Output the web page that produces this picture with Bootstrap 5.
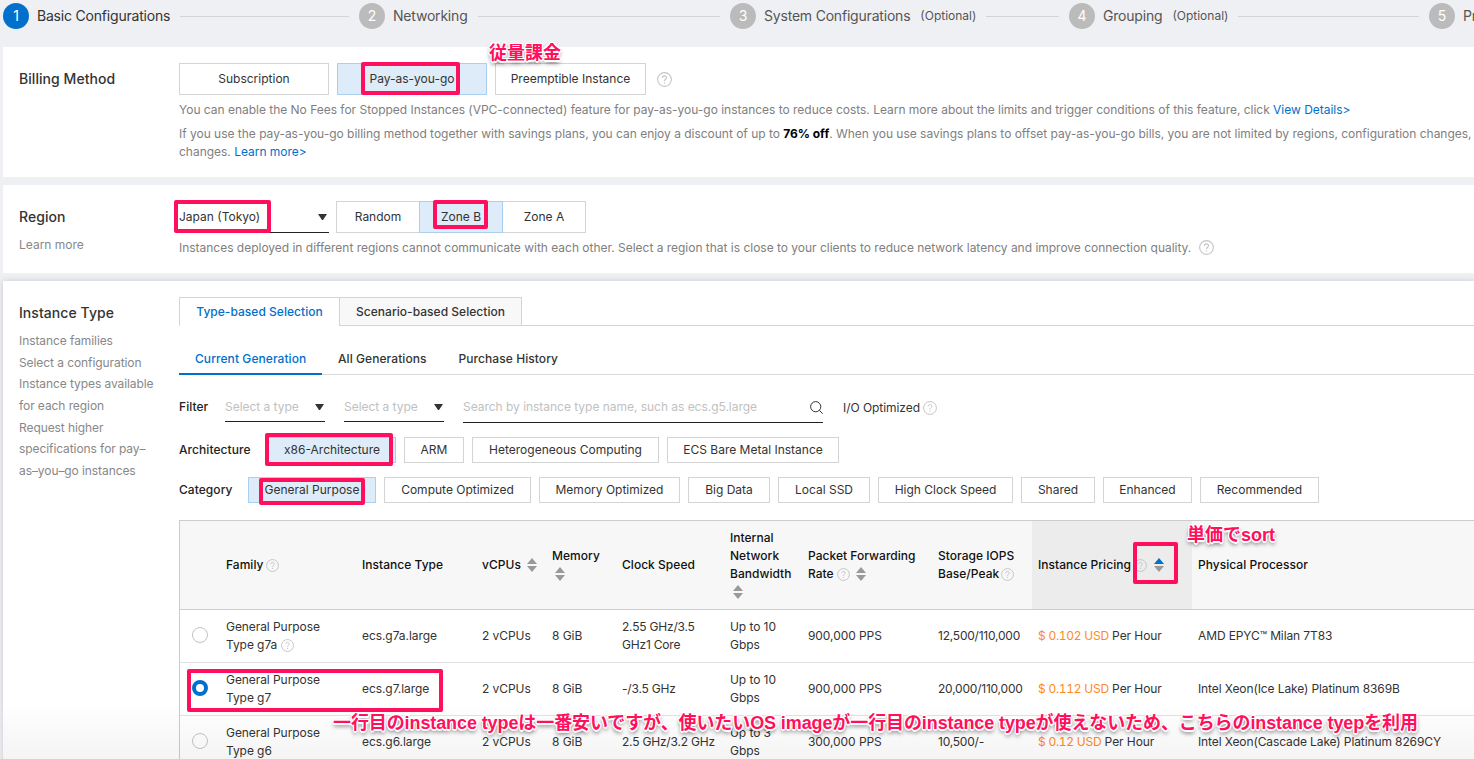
<!DOCTYPE html>
<html lang="en">
<head>
<meta charset="utf-8">
<meta name="viewport" content="width=device-width, initial-scale=1">
<title>Basic Configurations</title>
<link href="https://cdn.jsdelivr.net/npm/bootstrap@5.3.0/dist/css/bootstrap.min.css" rel="stylesheet">
<style>
  body { font-family: Inter, "Noto Sans CJK JP", sans-serif; font-size: 12px; line-height: 18px; color: #333; background: #eff0f4; height: 759px; overflow: hidden; position: relative; }
  .stepper { height: 47px; padding: 3px 0 0 3px; overflow: hidden; }
  .step-item { height: 26px; flex: none; font-size: 14px; letter-spacing: -.2px; color: #555; white-space: nowrap; }
  .step-num { width: 26px; height: 26px; background: #bbb; color: #fff; margin-right: 8px; flex: none; font-size: 14px; }
  .step-item.active .step-num { background: #0070cc; }
  .step-item.active { color: #333; }
  .step-line { height: 1px; background: #d4d4d4; margin: 0 10px; flex: 1; }
  .opt { font-size: 12px; margin-left: 10px; letter-spacing: 0; }
  .panel { background: #fff; margin: 0 0 8px 3px; padding: 16px 0 16px 16px; }
  .panel-raised { box-shadow: 0 0 6px rgba(0,0,0,.16); height: 500px; }
  .side { width: 160px; flex: none; color: #888; }
  .side-title { font-size: 14px; font-weight: 500; color: #333; line-height: 32px; letter-spacing: .06px; }
  .side-links { line-height: 21.65px; width: 140px; padding-top: 1px; letter-spacing: -.08px; }
  .body-col { flex: 1; min-width: 0; white-space: nowrap; }
  .choice { border: 1px solid #d4d4d4; background: #fff; border-radius: 0; color: #333; font-size: 12px; line-height: 16px; padding: 0; height: 32px; flex: none; display: flex; align-items: center; justify-content: center; }
  .choice.on { background: #deebf9; border-color: #abd0ee; position: relative; z-index: 1; }
  .choice + .joined { margin-left: -1px; }
  .choice-sm { height: 26px; }
  .hint { color: #808080; margin-top: 6px; letter-spacing: -.017px; }
  .lnk { color: #0070cc; text-decoration: none; }
  .q { width: 13px; height: 13px; flex: none; vertical-align: -3px; }
  .q-lg { width: 15px; height: 15px; }
  .field { border-bottom: 1px solid #222; }
  .caret { width: 9px; height: 6px; }
  .type-tabs { border-bottom: 1px solid #d4d4d4; height: 29px; font-weight: 500; letter-spacing: .03px; }
  .type-tab { border: 1px solid #d4d4d4; height: 29px; background: #f8f8f8; display: flex; align-items: center; justify-content: center; }
  .type-tab.on { background: #fff; color: #0070cc; border-bottom-color: #fff; border-right: 0; }
  .gen-tabs { border-bottom: 1px solid #dadada; height: 49px; font-weight: 500; letter-spacing: .07px; }
  .gen-tab { padding: 16px 16px 0; height: 49px; }
  .gen-tab.on { color: #0070cc; border-bottom: 2px solid #0070cc; width: 143px; }
  .ph { color: #c1c1c1; letter-spacing: -.03px; }
  .lab { font-weight: 500; color: #222; letter-spacing: .06px; }
  .inst-table { table-layout: fixed; width: 100%; border-left: 1px solid #ccc; border-top: 1px solid #ccc; margin: 17px 0 0; border-collapse: separate; border-spacing: 0; }
  .inst-table td, .inst-table th { padding: 8px 0 8px 6px; vertical-align: middle; border-bottom: 1px solid #e2e2e2; }
  .inst-table th { background: #f7f7f7; font-weight: 500; color: #111; border-bottom-color: #ccc; height: 89px; letter-spacing: .03px; }
  .inst-table th.sorted { background: #ececec; }
  .inst-table td { height: 53px; letter-spacing: -.07px; }
  .inst-table td:nth-child(6) { letter-spacing: -.2px; }
  .inst-table td:nth-child(9) { letter-spacing: -.22px; }
  .inst-table td:nth-child(11) { letter-spacing: -.11px; }
  .rad { width: 16px; height: 16px; border: 1px solid #c4c4c4; border-radius: 50%; background: #fff; margin: -2px 0 0 6px; }
  .rad.on { border: 4px solid #0070cc; }
  .price { color: #ff8a1c; font-variant-numeric: tabular-nums; letter-spacing: -.27px; }
  .sort { width: 10px; height: 14px; vertical-align: -3px; }
  .fade-end { position: absolute; left: 3px; right: 0; bottom: 0; height: 56px; background: linear-gradient(rgba(0,0,0,0), rgba(0,0,0,.045)); }
  .box-note { position: absolute; z-index: 5; border: 4px solid #ff0f5c; border-radius: 2px; }
  .text-note { position: absolute; z-index: 6; color: #ff0f5c; font: 700 18px/26px "Liberation Sans", "Noto Sans CJK JP", sans-serif; white-space: nowrap;
    text-shadow: 1px 0 #fff, -1px 0 #fff, 0 1px #fff, 0 -1px #fff, 1px 1px #fff, -1px -1px #fff, 1px -1px #fff, -1px 1px #fff, 0 2px #fff, 0 3px 4px rgba(0,0,0,.65); }
  .text-note.long { letter-spacing: -.1px; }
</style>
</head>
<body>
<svg class="d-none">
  <symbol id="q" viewBox="0 0 14 14"><circle cx="7" cy="7" r="6.4" fill="none" stroke="#c4c4c4"/><path d="M5.1 5.5C5.1 3 8.9 3 8.9 5.4 8.9 6.8 7 6.8 7 8.4M7 9.6v1.1" fill="none" stroke="#c4c4c4"/></symbol>
  <symbol id="s" viewBox="0 0 10 14"><path d="M0 6 5 0l5 6z" fill="var(--up, #999)"/><path d="M0 8h10l-5 6z" fill="#999"/></symbol>
  <symbol id="c" viewBox="0 0 9 6"><path d="M0 0h9L5 6H4z" fill="#333"/></symbol>
</svg>

<div class="stepper d-flex">
  <div class="step-item active d-flex align-items-center" style="width:356px"><span class="step-num rounded-circle d-flex align-items-center justify-content-center">1</span>Basic Configurations<span class="step-line"></span></div>
  <div class="step-item d-flex align-items-center" style="width:371px"><span class="step-num rounded-circle d-flex align-items-center justify-content-center">2</span>Networking<span class="step-line"></span></div>
  <div class="step-item d-flex align-items-center" style="width:339px"><span class="step-num rounded-circle d-flex align-items-center justify-content-center">3</span>System Configurations<span class="opt">(Optional)</span><span class="step-line"></span></div>
  <div class="step-item d-flex align-items-center" style="width:360px"><span class="step-num rounded-circle d-flex align-items-center justify-content-center">4</span>Grouping<span class="opt">(Optional)</span><span class="step-line"></span></div>
  <div class="step-item d-flex align-items-center"><span class="step-num rounded-circle d-flex align-items-center justify-content-center">5</span>Preview</div>
</div>

<section class="panel d-flex">
  <div class="side"><div class="side-title">Billing Method</div></div>
  <div class="body-col">
    <div class="d-flex gap-2 align-items-center">
      <button class="choice" style="width:150px">Subscription</button>
      <button class="choice on" style="width:150px">Pay-as-you-go</button>
      <button class="choice" style="width:151px">Preemptible Instance</button>
      <svg class="q q-lg" style="margin-left:3px"><use href="#q"/></svg>
    </div>
    <div class="hint">You can enable the No Fees for Stopped Instances (VPC-connected) feature for pay-as-you-go instances to reduce costs. Learn more about the limits and trigger conditions of this feature, click <a class="lnk" href="#">View Details&gt;</a></div>
    <div class="hint overflow-hidden">If you use the pay-as-you-go billing method together with savings plans, you can enjoy a discount of up to <b class="text-black fw-bold">76% off</b>. When you use savings plans to offset pay-as-you-go bills, you are not limited by regions, configuration changes,<br>changes. <a class="lnk" href="#">Learn more&gt;</a></div>
  </div>
</section>

<section class="panel d-flex">
  <div class="side"><div class="side-title">Region</div><div style="margin-top:4px;line-height:16px">Learn more</div></div>
  <div class="body-col">
    <div class="d-flex">
      <div class="field d-flex align-items-center justify-content-between" style="width:150px;height:32px;margin-right:7px">Japan (Tokyo)<svg class="caret" style="margin-right:2px"><use href="#c"/></svg></div>
      <button class="choice" style="width:84px">Random</button>
      <button class="choice joined on" style="width:84px">Zone B</button>
      <button class="choice joined" style="width:84px">Zone A</button>
    </div>
    <div class="hint">Instances deployed in different regions cannot communicate with each other. Select a region that is close to your clients to reduce network latency and improve connection quality. <svg class="q q-lg" style="margin-left:4px"><use href="#q"/></svg></div>
  </div>
</section>

<section class="panel panel-raised d-flex mb-0">
  <div class="side">
    <div class="side-title">Instance Type</div>
    <div class="side-links"><div>Instance families</div><div>Select a configuration</div><div>Instance types available for each region</div><div>Request higher specifications for pay–<br>as–you–go instances</div></div>
  </div>
  <div class="body-col">
    <div class="type-tabs d-flex">
      <div class="type-tab on" style="width:160px">Type-based Selection</div>
      <div class="type-tab" style="width:183px">Scenario-based Selection</div>
    </div>
    <div class="gen-tabs d-flex pt-0">
      <div class="gen-tab on pt-4">Current Generation</div>
      <div class="gen-tab pt-4">All Generations</div>
      <div class="gen-tab pt-4">Purchase History</div>
    </div>
    <div class="d-flex" style="margin-top:17px;height:31px;line-height:30px">
      <span class="lab" style="width:46px">Filter</span>
      <div class="field ph d-flex align-items-center justify-content-between" style="width:100px;height:30px;margin-right:19px">Select a type<svg class="caret" style="margin-right:1px"><use href="#c"/></svg></div>
      <div class="field ph d-flex align-items-center justify-content-between" style="width:100px;height:30px;margin-right:19px">Select a type<svg class="caret" style="margin-right:1px"><use href="#c"/></svg></div>
      <div class="field ph d-flex align-items-center justify-content-between" style="width:360px;height:31px;margin-right:20px">Search by instance type name, such as ecs.g5.large<svg width="13" height="13" viewBox="0 0 13 13" fill="none" stroke="#333"><circle cx="5.7" cy="5.7" r="5.1"/><path d="m9.3 9.3 3.4 3.4"/></svg></div>
      <span style="line-height:32px;letter-spacing:-.05px">I/O Optimized <svg class="q" style="width:14px;height:14px"><use href="#q"/></svg></span>
    </div>
    <div class="d-flex gap-2 align-items-center" style="margin-top:14px">
      <span class="lab" style="width:81px">Architecture</span>
      <button class="choice choice-sm on" style="width:128px">x86-Architecture</button>
      <button class="choice choice-sm" style="width:60px">ARM</button>
      <button class="choice choice-sm" style="width:187px">Heterogeneous Computing</button>
      <button class="choice choice-sm" style="width:172px">ECS Bare Metal Instance</button>
    </div>
    <div class="d-flex gap-2 align-items-center" style="margin-top:14px">
      <span class="lab" style="width:61px">Category</span>
      <button class="choice choice-sm on" style="width:128px">General Purpose</button>
      <button class="choice choice-sm" style="width:147px">Compute Optimized</button>
      <button class="choice choice-sm" style="width:141px">Memory Optimized</button>
      <button class="choice choice-sm" style="width:82px">Big Data</button>
      <button class="choice choice-sm" style="width:92px">Local SSD</button>
      <button class="choice choice-sm" style="width:135px">High Clock Speed</button>
      <button class="choice choice-sm" style="width:74px">Shared</button>
      <button class="choice choice-sm" style="width:89px">Enhanced</button>
      <button class="choice choice-sm" style="width:119px">Recommended</button>
    </div>
    <table class="inst-table">
      <colgroup><col style="width:40px"><col style="width:136px"><col style="width:120px"><col style="width:70px"><col style="width:70px"><col style="width:108px"><col style="width:78px"><col style="width:130px"><col style="width:100px"><col style="width:160px"><col></colgroup>
      <thead><tr>
        <th></th><th>Family <svg class="q" style="margin-left:-1px"><use href="#q"/></svg></th><th>Instance Type</th><th>vCPUs&nbsp; <svg class="sort"><use href="#s"/></svg></th>
        <th>Memory<br><svg class="sort" style="margin-left:3px"><use href="#s"/></svg></th><th>Clock Speed</th>
        <th>Internal<br>Network<br>Bandwidth<br><svg class="sort" style="margin-left:3px"><use href="#s"/></svg></th>
        <th>Packet Forwarding<br>Rate <svg class="q"><use href="#q"/></svg>&nbsp; <svg class="sort"><use href="#s"/></svg></th>
        <th>Storage IOPS<br>Base/Peak <svg class="q" style="margin-left:-1px"><use href="#q"/></svg></th>
        <th class="sorted">Instance Pricing <svg class="q"><use href="#q"/></svg>&nbsp; <svg class="sort" style="--up:#0070cc"><use href="#s"/></svg></th><th>Physical Processor</th>
      </tr></thead>
      <tbody>
        <tr><td><div class="rad"></div></td><td>General Purpose<br>Type g7a <svg class="q"><use href="#q"/></svg></td><td>ecs.g7a.large</td><td>2 vCPUs</td><td>8 GiB</td><td>2.55 GHz/3.5<br>GHz1 Core</td><td>Up to 10<br>Gbps</td><td>900,000 PPS</td><td>12,500/110,000</td><td><span class="price">$ 0.102 USD</span> Per Hour</td><td>AMD EPYC™ Milan 7T83</td></tr>
        <tr><td><div class="rad on"></div></td><td>General Purpose<br>Type g7</td><td>ecs.g7.large</td><td>2 vCPUs</td><td>8 GiB</td><td>-/3.5 GHz</td><td>Up to 10<br>Gbps</td><td>900,000 PPS</td><td>20,000/110,000</td><td><span class="price">$ 0.112 USD</span> Per Hour</td><td>Intel Xeon(Ice Lake) Platinum 8369B</td></tr>
        <tr><td><div class="rad"></div></td><td>General Purpose<br>Type g6</td><td>ecs.g6.large</td><td>2 vCPUs</td><td>8 GiB</td><td>2.5 GHz/3.2 GHz</td><td>Up to 3<br>Gbps</td><td>300,000 PPS</td><td>10,500/-</td><td><span class="price">$ 0.12 USD</span> Per Hour</td><td>Intel Xeon(Cascade Lake) Platinum 8269CY</td></tr>
      </tbody>
    </table>
  </div>
</section>
<div class="fade-end"></div>

<!-- annotations laid over the page -->
<div class="box-note" style="left:361px;top:62px;width:99px;height:33px"></div>
<div class="box-note" style="left:174px;top:200px;width:97px;height:33px"></div>
<div class="box-note" style="left:433px;top:200px;width:55px;height:29px"></div>
<div class="box-note" style="left:265px;top:433px;width:128px;height:33px"></div>
<div class="box-note" style="left:259px;top:478px;width:106px;height:27px"></div>
<div class="box-note" style="left:1133px;top:542px;width:45px;height:42px"></div>
<div class="box-note" style="left:187px;top:669px;width:256px;height:43px"></div>
<div class="text-note" style="left:489px;top:40px">従量課金</div>
<div class="text-note" style="left:1187px;top:522px">単価でsort</div>
<div class="text-note long" style="left:333px;top:710px">一行目のinstance typeは一番安いですが、使いたいOS imageが一行目のinstance typeが使えないため、こちらのinstance tyepを利用</div>
<script src="https://cdn.jsdelivr.net/npm/bootstrap@5.3.0/dist/js/bootstrap.bundle.min.js"></script>
</body>
</html>
